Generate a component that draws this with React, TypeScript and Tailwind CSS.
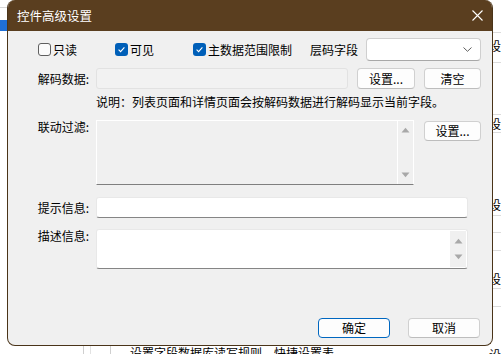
import React from "react";

const Check = ({ checked, label }: { checked?: boolean; label: string }) => (
  <label className="flex items-center gap-[2px]">
    {checked ? (
      <span className="w-[13px] h-[13px] rounded-[3px] bg-[#005fb8] flex items-center justify-center">
        <svg width="9" height="9" viewBox="0 0 9 9">
          <path d="M1.6 4.7 3.6 6.6 7.4 2.4" stroke="#ffffff" strokeWidth="1.1" fill="none" />
        </svg>
      </span>
    ) : (
      <span className="w-[13px] h-[13px] rounded-[3px] border border-[#5f5f5f] bg-[#fbfbfb]" />
    )}
    <span>{label}</span>
  </label>
);

const Btn = ({ children, primary, w }: { children: React.ReactNode; primary?: boolean; w: string }) => (
  <button
    className={
      primary
        ? `${w} h-[20px] rounded-[4px] border border-[#0067c0] bg-[#fdfdfd] leading-[18px]`
        : `${w} h-full rounded-[4px] border border-[#d0d0d0] border-b-[#bdbdbd] bg-[#fdfdfd] leading-[18px]`
    }
  >
    {children}
  </button>
);

const Arrows = ({ className }: { className: string }) => (
  <div className={`${className} flex flex-col items-center justify-between`}>
    <svg width="9" height="6" viewBox="0 0 9 6">
      <path d="M0.5 5.5 4.5 0.8 8.5 5.5Z" fill="#a8a8a8" />
    </svg>
    <svg width="9" height="6" viewBox="0 0 9 6">
      <path d="M0.5 0.5 4.5 5.2 8.5 0.5Z" fill="#a8a8a8" />
    </svg>
  </div>
);

const Label = ({ children, top }: { children: React.ReactNode; top?: boolean }) => (
  <span className={`w-[81px] shrink-0 text-right ${top ? "leading-[14px] self-start" : "leading-[16px]"}`}>
    {children}
  </span>
);

export default function App() {
  return (
    <div className="relative w-[501px] h-[354px] overflow-hidden bg-white text-[12px] text-black font-['Noto_Sans_CJK_SC','Microsoft_YaHei',sans-serif]">
      {/* window behind the dialog */}
      <div className="absolute left-0 top-[7px] w-[7px] border-t border-[#d8d8d8]" />
      <div className="absolute left-0 top-[20px] w-[7px] h-[11px] bg-[#1f6fd6]" />
      <div className="absolute left-[488px] top-0 w-[13px] h-[354px] text-[12px] leading-[14px]">
        <div className="absolute left-0 top-[32px] w-full border-t border-[#dcdcdc]" />
        <span className="absolute left-[1px] top-[39px]">设</span>
        <div className="absolute left-0 top-[62px] w-full border-t border-[#dcdcdc]" />
        <div className="absolute left-0 top-[114px] w-full border-t border-[#dcdcdc]" />
        <span className="absolute left-[1px] top-[117px]">设</span>
        <div className="absolute left-0 top-[132px] w-full border-t border-[#dcdcdc]" />
        <span className="absolute left-[1px] top-[198px]">设</span>
        <div className="absolute left-0 top-[215px] w-full border-t border-[#dcdcdc]" />
        <div className="absolute left-0 top-[232px] w-full border-t border-[#dcdcdc]" />
        <div className="absolute left-0 top-[250px] w-full border-t border-[#dcdcdc]" />
        <span className="absolute left-[1px] top-[272px]">设</span>
        <div className="absolute left-0 top-[288px] w-full border-t border-[#dcdcdc]" />
        <div className="absolute left-0 top-[306px] w-full border-t border-[#dcdcdc]" />
        <span className="absolute left-[1px] top-[348px]">设</span>
      </div>
      <div className="absolute left-[83px] top-[340px] h-[14px] border-l border-[#cfcfcf]" />
      <div className="absolute left-[90px] top-[340px] h-[14px] border-l border-[#e2e2e2]" />
      <div className="absolute left-[110px] top-[340px] h-[14px] border-l border-[#cfcfcf]" />
      <span className="absolute left-[130px] top-[346px] text-[12px] leading-[14px] whitespace-nowrap">
        设置字段数据库读写规则、快捷设置表
      </span>

      {/* dialog */}
      <div className="absolute left-[7px] top-0 w-[486px] h-[346px] flex flex-col rounded-lg overflow-hidden border-x border-b border-[#4a3419] bg-[#f0f0f0]">
        <div className="h-[31px] shrink-0 bg-[#5a3e1f] flex items-center justify-between pl-[9px] pr-[9px] text-white">
          <span className="text-[12.5px] leading-[16px]">控件高级设置</span>
          <svg width="11" height="11" viewBox="0 0 11 11">
            <path d="M0.5 0.5 10.5 10.5M10.5 0.5 0.5 10.5" stroke="#ffffff" strokeWidth="1.1" />
          </svg>
        </div>

        <div className="flex-1 flex flex-col">
          <div className="mt-[7px] h-[23px] flex items-center pl-[30px]">
            <div className="w-[77px]">
              <Check label="只读" />
            </div>
            <div className="w-[78px]">
              <Check checked label="可见" />
            </div>
            <div className="w-[117px]">
              <Check checked label="主数据范围限制" />
            </div>
            <span className="w-[56px]">层码字段</span>
            <div className="w-[115px] h-full rounded-[4px] border border-[#cfcfcf] border-b-[#a8a8a8] bg-white flex items-center justify-end pr-[8px]">
              <svg width="9" height="5" viewBox="0 0 9 5">
                <path d="M0.5 0.5 4.5 4.3 8.5 0.5" stroke="#5e5e5e" strokeWidth="1" fill="none" />
              </svg>
            </div>
          </div>

          <div className="mt-[7px] h-[21px] flex items-center gap-[7px]">
            <Label>解码数据:</Label>
            <div className="w-[252px] h-full rounded-[3px] border border-[#e2e2e2] bg-[#f2f2f2]" />
            <div className="ml-[2px] h-full flex gap-[9px]">
              <Btn w="w-[58px]">设置...</Btn>
              <Btn w="w-[57px]">清空</Btn>
            </div>
          </div>

          <div className="mt-[5px] h-[16px] leading-[16px] pl-[88px]">
            说明：列表页面和详情页面会按解码数据进行解码显示当前字段。
          </div>

          <div className="mt-[10px] flex gap-[7px]">
            <Label top>联动过滤:</Label>
            <div className="w-[318px] h-[65px] flex border border-white border-b-[#7f7f7f] bg-[#f0f0f0]">
              <div className="flex-1" />
              <Arrows className="w-[16px] border-l border-white py-[6px]" />
            </div>
            <div className="ml-[3px] mt-[1px] h-[20px] flex">
              <Btn w="w-[57px]">设置...</Btn>
            </div>
          </div>

          <div className="mt-[12px] h-[21px] flex items-center gap-[7px]">
            <Label>提示信息:</Label>
            <div className="w-[372px] h-full rounded-[3px] border border-[#e8e8e8] border-b-[#858585] bg-white" />
          </div>

          <div className="mt-[11px] flex gap-[7px]">
            <Label top>描述信息:</Label>
            <div className="w-[372px] h-[40px] flex rounded-[3px] border border-[#e8e8e8] border-b-[#858585] bg-white">
              <div className="flex-1" />
              <Arrows className="w-[16px] my-[1px] mr-[1px] bg-[#f0f0f0] py-[7px]" />
            </div>
          </div>

          <div className="flex-1" />

          <div className="flex justify-end gap-[18px] pr-[12px] pb-[7px]">
            <Btn primary w="w-[72px]">确定</Btn>
            <div className="h-[20px] flex">
              <Btn w="w-[72px]">取消</Btn>
            </div>
          </div>
        </div>
      </div>
    </div>
  );
}
